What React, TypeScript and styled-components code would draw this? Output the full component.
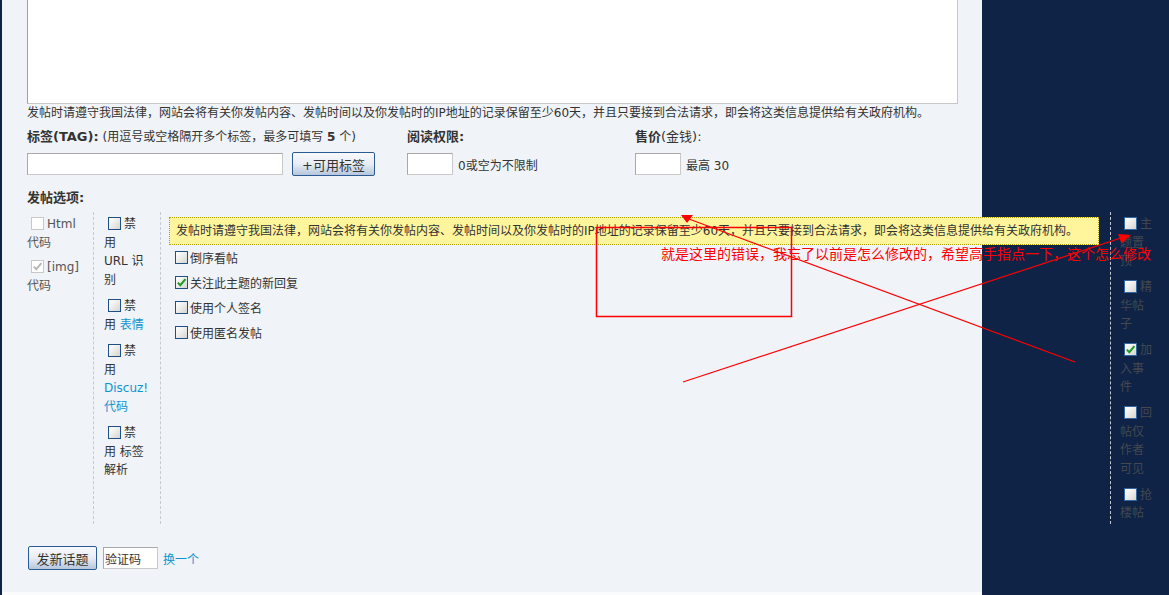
import React from 'react';
import styled, { createGlobalStyle } from 'styled-components';

const LAW_TEXT =
  '发帖时请遵守我国法律，网站会将有关你发帖内容、发帖时间以及你发帖时的IP地址的记录保留至少60天，并且只要接到合法请求，即会将这类信息提供给有关政府机构。';

const FONT = '"DejaVu Sans", "Noto Sans CJK SC", sans-serif';

type Tone = 'normal' | 'disabled' | 'dark';

const GlobalStyle = createGlobalStyle`
  html, body {
    margin: 0;
    padding: 0;
    background: #0f2346;
  }
  body {
    font-family: ${FONT};
    font-size: 12px;
    color: #333;
  }
`;

function CheckBox({ checked, tone = 'normal' }: { checked?: boolean; tone?: Tone }) {
  return (
    <Box $tone={tone}>
      {checked && (
        <svg width="11" height="11" viewBox="0 0 11 11">
          <path
            d="M1.8 5.6 L4.3 8.2 L9.4 2.2"
            fill="none"
            stroke={tone === 'disabled' ? '#b8b8b8' : '#1e9a22'}
            strokeWidth="2"
          />
        </svg>
      )}
    </Box>
  );
}

function Annotations() {
  return (
    <>
      <Overlay width="1169" height="595" viewBox="0 0 1169 595">
        <rect x="596.5" y="227.5" width="195" height="89" fill="none" stroke="#ff0000" strokeWidth="1.5" />
        <line x1="683" y1="382" x2="1121" y2="238" stroke="#ff0000" strokeWidth="1.2" />
        <polygon points="1131,235 1121.5,243.5 1118,234" fill="#ff0000" />
        <line x1="1075" y1="362" x2="689" y2="219" stroke="#ff0000" strokeWidth="1.2" />
        <polygon points="681,215 693,215 687,223" fill="#ff0000" />
      </Overlay>
      <RedNote>就是这里的错误，我忘了以前是怎么修改的，希望高手指点一下，这个怎么修改</RedNote>
    </>
  );
}

export default function App() {
  return (
    <Page>
      <GlobalStyle />
      <Panel>
        <Editor readOnly />
        <Notice>{LAW_TEXT}</Notice>

        <MetaRow>
          <Field $w={380}>
            <FieldLabel>
              <b>标签(TAG):</b>
              <Hint> (用逗号或空格隔开多个标签，最多可填写 <b>5</b> 个)</Hint>
            </FieldLabel>
            <Controls>
              <TextInput $w={256} />
              <BlueButton $w={83} $ml={9}>+可用标签</BlueButton>
            </Controls>
          </Field>
          <Field $w={228}>
            <FieldLabel>
              <b>阅读权限:</b>
            </FieldLabel>
            <Controls>
              <TextInput $w={46} />
              <SideText>0或空为不限制</SideText>
            </Controls>
          </Field>
          <Field $w={200}>
            <FieldLabel>
              <b>售价</b>(金钱):
            </FieldLabel>
            <Controls>
              <TextInput $w={46} />
              <SideText>最高 30</SideText>
            </Controls>
          </Field>
        </MetaRow>

        <SectionTitle>发帖选项:</SectionTitle>

        <Options>
          <OptionCol $w={55} $pl={0} $pr={11} $gap={6} $border>
            <OptionItem $tone="disabled">
              <CheckBox tone="disabled" />
              Html 代码
            </OptionItem>
            <OptionItem $tone="disabled">
              <CheckBox tone="disabled" checked />
              [img] 代码
            </OptionItem>
          </OptionCol>

          <OptionCol $w={43} $pl={10} $pr={13} $gap={8} $border>
            <OptionItem>
              <CheckBox />
              禁用
              <br />
              URL 识别
            </OptionItem>
            <OptionItem>
              <CheckBox />
              禁用 <Link>表情</Link>
            </OptionItem>
            <OptionItem>
              <CheckBox />
              禁用 <Link>Discuz! 代码</Link>
            </OptionItem>
            <OptionItem>
              <CheckBox />
              禁用 标签解析
            </OptionItem>
          </OptionCol>

          <OptionCol $w={930} $pl={8} $pr={11} $gap={0} $border>
            <YellowTip>{LAW_TEXT}</YellowTip>
            <CheckRow>
              <CheckBox />
              倒序看帖
            </CheckRow>
            <CheckRow>
              <CheckBox checked />
              关注此主题的新回复
            </CheckRow>
            <CheckRow>
              <CheckBox />
              使用个人签名
            </CheckRow>
            <CheckRow>
              <CheckBox />
              使用匿名发帖
            </CheckRow>
          </OptionCol>

          <OptionCol $w={34} $pl={9} $pr={0} $gap={7.5}>
            <OptionItem $tone="dark">
              <CheckBox tone="dark" />
              主题置顶
            </OptionItem>
            <OptionItem $tone="dark">
              <CheckBox tone="dark" />
              精华帖子
            </OptionItem>
            <OptionItem $tone="dark">
              <CheckBox tone="dark" checked />
              加入事件
            </OptionItem>
            <OptionItem $tone="dark">
              <CheckBox tone="dark" />
              回帖仅作者可见
            </OptionItem>
            <OptionItem $tone="dark">
              <CheckBox tone="dark" />
              抢楼帖
            </OptionItem>
          </OptionCol>
        </Options>

        <SubmitRow>
          <BlueButton $w={69} $ml={1}>发新话题</BlueButton>
          <CaptchaInput readOnly value="验证码" />
          <Link>换一个</Link>
        </SubmitRow>
      </Panel>
      <Annotations />
    </Page>
  );
}

const Page = styled.div`
  position: relative;
  width: 1169px;
  height: 595px;
  overflow: hidden;
  background: #0f2346;
`;

const Panel = styled.div`
  box-sizing: border-box;
  width: 980px;
  height: 595px;
  margin-left: 2px;
  padding-left: 25px;
  background: #f0f3f8;
  border-bottom: 3px solid #fafbfd;
`;

const Editor = styled.textarea`
  display: block;
  box-sizing: border-box;
  width: 931px;
  height: 104px;
  margin: 0;
  padding: 0;
  border-style: solid;
  border-width: 0 1px 1px 1px;
  border-color: #c8c8c8 #c8c8c8 #c8c8c8 #a0a0a0;
  background: #fff;
  resize: none;
  outline: none;
`;

const Notice = styled.p`
  margin: 0;
  line-height: 18px;
  white-space: nowrap;
`;

const MetaRow = styled.div`
  display: flex;
  margin-top: 6px;
`;

const Field = styled.div<{ $w: number }>`
  flex: none;
  width: ${(p) => p.$w}px;
`;

const FieldLabel = styled.div`
  font-size: 13px;
  line-height: 18px;
  white-space: nowrap;
  color: #333;
`;

const Hint = styled.span`
  font-size: 12px;
`;

const Controls = styled.div`
  display: flex;
  align-items: center;
  height: 24px;
  margin-top: 6px;
`;

const TextInput = styled.input<{ $w: number }>`
  box-sizing: border-box;
  width: ${(p) => p.$w}px;
  height: 22px;
  margin: 0;
  padding: 0 2px;
  border: 1px solid;
  border-color: #a8a8a8 #cacaca #cacaca #a8a8a8;
  background: #fff;
  outline: none;
`;

const BlueButton = styled.button<{ $w: number; $ml: number }>`
  box-sizing: border-box;
  width: ${(p) => p.$w}px;
  height: 24px;
  margin: 0 0 0 ${(p) => p.$ml}px;
  padding: 0;
  border: 1px solid #2c5a93;
  border-radius: 2px;
  background: linear-gradient(#f8f9fc 0%, #e8edf4 50%, #b6c6dc 100%);
  font-family: ${FONT};
  font-size: 13px;
  color: #333;
`;

const SideText = styled.span`
  margin-left: 5px;
  font-size: 12px;
`;

const SectionTitle = styled.div`
  margin-top: 13px;
  font-size: 13px;
  font-weight: bold;
  line-height: 18px;
`;

const Options = styled.div`
  display: flex;
  width: 1140px;
  height: 312px;
  margin-top: 5px;
`;

const OptionCol = styled.div<{ $w: number; $pl: number; $pr: number; $gap: number; $border?: boolean }>`
  flex: none;
  display: flex;
  flex-direction: column;
  gap: ${(p) => p.$gap}px;
  width: ${(p) => p.$w}px;
  padding: 3px ${(p) => p.$pr}px 0 ${(p) => p.$pl}px;
  border-right: 1px dashed ${(p) => (p.$border ? '#c6c9cf' : 'transparent')};
`;

const OptionItem = styled.div<{ $tone?: Tone }>`
  line-height: 18.5px;
  color: ${(p) => (p.$tone === 'dark' ? '#44484f' : p.$tone === 'disabled' ? '#555' : '#333')};
`;

const Box = styled.span<{ $tone: Tone }>`
  display: inline-block;
  box-sizing: border-box;
  width: 13px;
  height: 13px;
  margin: 0 3px 0 4px;
  vertical-align: -2px;
  border: 1px solid
    ${(p) => (p.$tone === 'disabled' ? '#c8c8c8' : p.$tone === 'dark' ? '#34679f' : '#1f4f85')};
  background: ${(p) =>
    p.$tone === 'disabled' ? '#fff' : 'linear-gradient(135deg, #ffffff 0%, #eeeeec 45%, #d4d4d0 100%)'};

  svg {
    display: block;
  }
`;

const Link = styled.span`
  color: #0d94d2;
`;

const YellowTip = styled.div`
  box-sizing: border-box;
  height: 28px;
  margin-top: 2px;
  padding: 0 6px;
  border: 1px dotted #b3a200;
  background: #fff59d;
  line-height: 26px;
  white-space: nowrap;
`;

const CheckRow = styled.div`
  display: flex;
  align-items: center;
  height: 25px;
  padding-left: 2px;

  & > span {
    margin-right: 2px;
  }
`;

const SubmitRow = styled.div`
  display: flex;
  align-items: center;
  margin-top: 22px;
`;

const CaptchaInput = styled.input`
  box-sizing: border-box;
  width: 55px;
  height: 22px;
  margin: 0 5px 0 6px;
  padding: 0 1px;
  border: 1px solid;
  border-color: #a8a8a8 #cacaca #cacaca #a8a8a8;
  background: #fff;
  font-family: ${FONT};
  font-size: 12px;
  color: #333;
  outline: none;
`;

const Overlay = styled.svg`
  position: absolute;
  top: 0;
  left: 0;
  pointer-events: none;
`;

const RedNote = styled.div`
  position: absolute;
  left: 661px;
  top: 244px;
  font-family: "Noto Sans CJK SC", sans-serif;
  font-size: 14px;
  line-height: 18px;
  color: #ff0000;
  white-space: nowrap;
  pointer-events: none;
`;
